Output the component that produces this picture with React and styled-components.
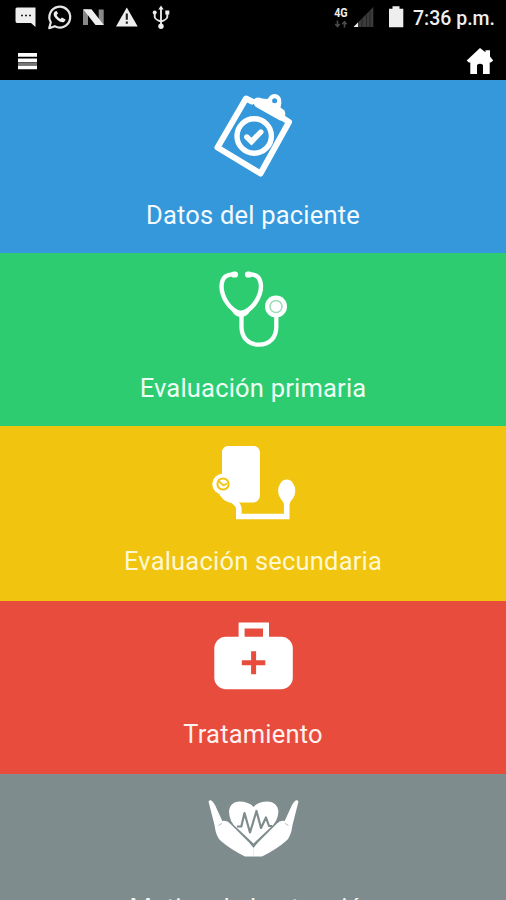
import React from "react";
import styled, { createGlobalStyle } from "styled-components";

const GlobalStyle = createGlobalStyle`
  body { margin: 0; background: #000; overflow: hidden; }
`;
const Screen = styled.main`
  width: 506px;
  height: 900px;
  overflow: hidden;
  display: flex;
  flex-direction: column;
  background: #000;
  font-family: Roboto, sans-serif;
`;
const StatusBar = styled.header`
  height: 36px;
  flex: none;
  display: flex;
  justify-content: space-between;
`;
const StatusGroup = styled.div`
  display: flex;
`;
const Glyphs = styled.svg`
  display: block;
  flex: none;
`;
const Clock = styled.time`
  width: 93px;
  font-size: 19.5px;
  font-weight: 500;
  line-height: 37px;
  color: #eee;
  white-space: nowrap;
`;
const NavBar = styled.nav`
  height: 44px;
  flex: none;
  display: flex;
  justify-content: space-between;
`;
const NavButton = styled.button`
  width: 60px;
  height: 44px;
  padding: 0;
  border: 0;
  background: none;
`;
const Panel = styled.section`
  height: ${(p) => p.$height}px;
  flex: none;
  display: flex;
  flex-direction: column;
  align-items: center;
  background: ${(p) => p.$color};
`;
const Artwork = styled.svg`
  display: block;
  width: 110px;
  height: 110px;
  flex: none;
`;
const Label = styled.h2`
  margin: ${(p) => p.$shift}px 0 0;
  height: 50px;
  line-height: 50px;
  font-size: 25.5px;
  font-weight: 400;
  letter-spacing: 0.2px;
  color: ${(p) => p.$ink};
  white-space: nowrap;
`;

const Clipboard = () => (
  <g fill="none" stroke="#fff" strokeLinejoin="round" strokeLinecap="round">
    <path d="M252 101.5 L246 98.5 L217.5 147.5 L260.5 173.5 L289 122 L282 117.5" strokeWidth="6" />
    <path d="M254 99.5 Q256.5 96 262 98.5 L267 99 L271 97 L281.5 102.5 L280.5 107.5 L284.5 110.5 Q286 114.5 284.5 118.5 Q282.5 121.5 279 120 L256 107 Q252.5 104 254 99.5Z" fill="#fff" stroke="none" />
    <circle cx="274.6" cy="100.8" r="4.6" strokeWidth="4.2" fill="#3498db" />
    <circle cx="254.2" cy="136" r="17.2" strokeWidth="5.4" />
    <path d="M246.8 137 L251.5 141.7 L260.8 132" strokeWidth="5.4" strokeLinejoin="miter" />
  </g>
);
const Stethoscope = () => (
  <g fill="none" stroke="#fff" strokeLinecap="round">
    <path d="M235 274.5 C227 273.5 222 277 221.5 286 C221.5 297 230 311 241 313 C252 311 261 297 261 286 C260.5 277 256 273.5 248 274.5" strokeWidth="4.4" />
    <path d="M235 274.5h-1M248 274.5h1" strokeWidth="6.2" />
    <path d="M228 304 Q234 312 241 312 Q248 312 254 304 Q248 318 241 317 Q234 318 228 304Z" fill="#fff" stroke="none" />
    <path d="M241.5 314 V327 C241.5 338 249 344.7 259 344.7 S276.3 338 276.3 327 V315" strokeWidth="4.3" />
    <circle cx="276" cy="306.5" r="11" fill="#fff" stroke="none" />
    <circle cx="276" cy="306.5" r="6" stroke="#9bdcb6" strokeWidth="1.5" />
  </g>
);
const PressureMonitor = () => (
  <g fill="#fff">
    <path d="M227 446 H255 Q259 447 260 452 V496 Q259 501.5 254 502.5 H229 L224 500 L219.5 495 L222 490 V451 Q223 447 227 446Z" />
    <circle cx="222.8" cy="484.2" r="10.5" />
    <circle cx="223" cy="484" r="5.6" fill="none" stroke="#f1c40f" strokeWidth="2" />
    <path d="M219 481.5 L223.5 485.5 L227 483.5" fill="none" stroke="#f1c40f" strokeWidth="1.8" />
    <path d="M232 500 Q238 504 238.8 508 V516.5 H286.7 V500" fill="none" stroke="#fff" strokeWidth="5.6" />
    <ellipse cx="286.7" cy="490.8" rx="8.6" ry="11.2" />
    <path d="M281 498h11.4l-3 6h-5.4z" />
  </g>
);
const FirstAidKit = () => (
  <g>
    <path d="M241.6 638 V625.4 H266 V638" fill="none" stroke="#fff" strokeWidth="6" />
    <rect x="214.3" y="636.8" width="78.5" height="52.4" rx="11.5" fill="#fff" />
    <path d="M253.6 651.2v23M241.8 662.8h23.5" stroke="#e74c3c" strokeWidth="5" />
  </g>
);
const CaringHands = () => (
  <g fill="#fff">
    <path d="M253.5 843.5 L237 828 Q229 822 229 811 Q230 802 239 801.5 Q249 801.5 253.5 807 Q258 801.5 268 801.5 Q277 802 278.5 811 Q278 821 271 827Z" />
    <path d="M237 826.5 H241.3 L244.5 813 L250 832.5 L256.5 811 L261 828 L266 817.5 L269 826 H272" fill="none" stroke="#7f8c8d" strokeWidth="2.2" strokeLinejoin="round" />
    <path d="M208.5 801.5 Q211 798 215 805 L222.3 821 Q227 820 230.5 824 L249 842.5 L253.6 848 V856.5 H245 Q230 849 221 841 Q216 837 214.5 825Z" />
    <path d="M298.5 801.5 Q296 798 292 805 L284.7 821 Q280 820 276.5 824 L258 842.5 L253.4 848 V856.5 H262 Q277 849 286 841 Q291 837 292.5 825Z" />
    <path d="M218.5 825.5l3.3-2M288.5 825.5l-3.3-2" stroke="#b5bdbd" strokeWidth="1" />
  </g>
);

const sections = [
  { top: 80, height: 173, color: "#3498db", ink: "#f3fbff", shift: 0, label: "Datos del paciente", Icon: Clipboard },
  { top: 253, height: 173, color: "#2ecc71", ink: "#edfff4", shift: 0, label: "Evaluación primaria", Icon: Stethoscope },
  { top: 426, height: 175, color: "#f1c40f", ink: "#fff8d2", shift: 0, label: "Evaluación secundaria", Icon: PressureMonitor },
  { top: 601, height: 173, color: "#e74c3c", ink: "#fff1ee", shift: -2, label: "Tratamiento", Icon: FirstAidKit },
  { top: 774, height: 173, color: "#7f8c8d", ink: "#f2f7f7", shift: -1, label: "Motivo de la atención", Icon: CaringHands },
];

export default function App() {
  return (
    <Screen>
      <GlobalStyle />
      <StatusBar>
        <Glyphs width="180" height="36" viewBox="0 0 180 36">
          <path d="M17 7.5H35.5V27L31 23H17Q15.5 23 15.5 21V9Q15.5 7.5 17 7.5Z" fill="#eee" />
          <path d="M21 15.5h2m2 0h2m2 0h2" stroke="#222" strokeWidth="1.7" />
          <path d="M49.2 28.2 L50.8 22.3 A10.4 10.4 0 1 1 54.8 26.2Z" fill="none" stroke="#e5e5e5" strokeWidth="2.2" strokeLinejoin="round" />
          <path d="M55 11.5 Q53 13 54 16 Q57 21 62 22.3 Q65 22.5 65.5 19.5 L62 17.4 L60.3 19 Q57.5 17.5 56.6 15 L58 13.5 L56.7 11Z" fill="#eee" />
          <path d="M83 9.5h5v15.5h-5zM98.7 9.5h5V25h-5z" fill="#888" />
          <path d="M83.2 9.3H91.5L103.8 25H95.5Z" fill="#eee" />
          <path d="M126.8 7.5 L137.7 26.5H116Z" fill="#eee" />
          <path d="M126.8 13.5v6.2M126.8 21.5v2.3" stroke="#222" strokeWidth="2.1" />
          <g fill="none" stroke="#e5e5e5" strokeWidth="1.9">
            <path d="M161 8V25M154.7 13V17Q155 19.5 161 21.5Q167 19.5 167.3 17V12" />
            <circle cx="161" cy="26.2" r="2.7" fill="#eee" stroke="none" />
            <path d="M158.3 9.5 L161 5.5 L163.7 9.5Z" fill="#eee" stroke="none" />
            <circle cx="154.7" cy="12.6" r="2" fill="#eee" stroke="none" />
            <path d="M165.3 10.5h4v4h-4z" fill="#eee" stroke="none" />
          </g>
        </Glyphs>
        <StatusGroup>
          <Glyphs width="86" height="36" viewBox="327 0 86 36">
            <text x="334.2" y="16.5" fill="#eee" fontFamily="Roboto, sans-serif" fontWeight="700" fontSize="12" textLength="13.5" lengthAdjust="spacingAndGlyphs">4G</text>
            <path d="M337.5 20.5v6M335.3 24l2.2 2.5 2.2-2.5M344.5 27.5v-5M342.3 24.2l2.2-2.5 2.2 2.5" fill="none" stroke="#4a4a4a" strokeWidth="1.6" />
            <path d="M373.3 7V27H353.5Z" fill="#3b3b3b" />
            <path d="M358 22.5V27H353.5Z" fill="#eee" />
            <path d="M362 18.5v8.5M366.5 14v13M370 10.5v16.5" stroke="#252525" strokeWidth="1" />
            <path d="M392.5 6.3h7V8.7h3.8V27.3H389V8.7h3.5z" fill="#eee" />
          </Glyphs>
          <Clock>7:36 p.m.</Clock>
        </StatusGroup>
      </StatusBar>
      <NavBar>
        <NavButton aria-label="Menú">
          <Glyphs width="60" height="44" viewBox="0 36 60 44">
            <path d="M18 54.8h19M18 60.4h19M18 67.4h19" stroke="#fff" strokeWidth="3.8" />
            <path d="M18 63.9h19" stroke="#777" strokeWidth="2.6" />
          </Glyphs>
        </NavButton>
        <NavButton aria-label="Inicio">
          <Glyphs width="60" height="44" viewBox="446 36 60 44">
            <path d="M480 48 L485.5 52.3 V50.2H490V56.5L493.2 60.5L490.8 62.5H489.7V74H483V65Q480 62.3 477 65V74H470.3V62.5H468.8L466.7 60.5Z" fill="#fff" />
          </Glyphs>
        </NavButton>
      </NavBar>
      {sections.map(({ top, height, color, ink, shift, label, Icon }) => (
        <Panel key={label} $height={height} $color={color}>
          <Artwork viewBox={`198 ${top} 110 110`} aria-hidden="true">
            <Icon />
          </Artwork>
          <Label $ink={ink} $shift={shift}>{label}</Label>
        </Panel>
      ))}
    </Screen>
  );
}
